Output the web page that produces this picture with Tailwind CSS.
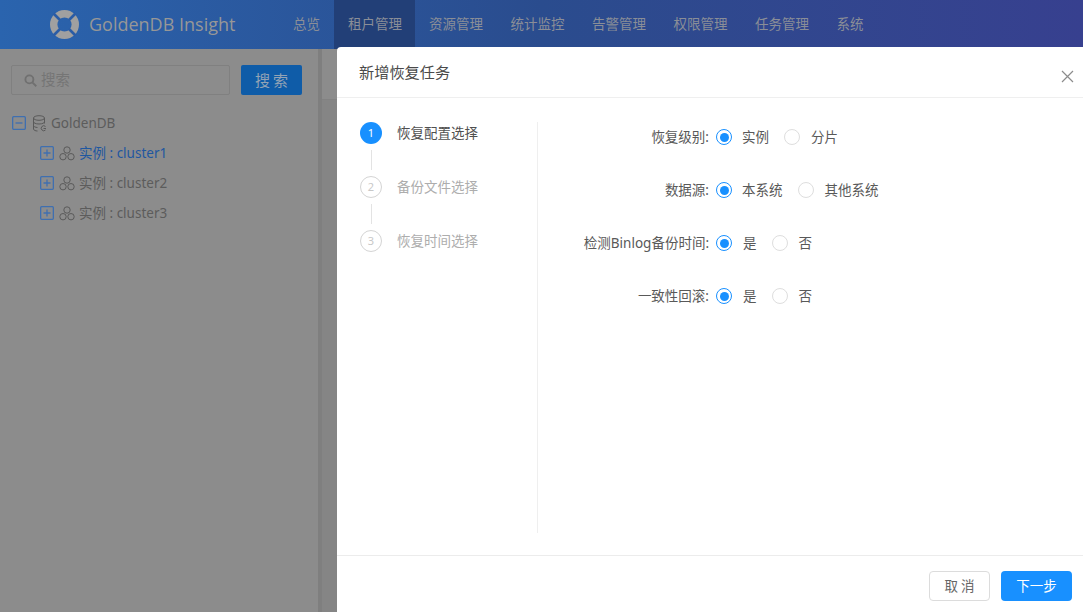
<!DOCTYPE html>
<html lang="en">
<head>
    <meta charset="UTF-8">
    <title>GoldenDB Insight</title>
    <script src="https://cdn.jsdelivr.net/npm/@tailwindcss/browser@4"></script>
</head>
<body class="relative w-[1083px] h-[612px] overflow-hidden bg-[#8c8c8c] font-['Noto_Sans','Noto_Sans_CJK_SC',sans-serif] text-[13.5px]">

    <!-- Top nav -->
    <header class="h-[49px] flex items-center bg-gradient-to-r from-[#2a64ae] via-[#2a4c8e] to-[#37408f] text-[#8a8e97]">
        <div class="flex items-center w-[293px] pl-[50px]">
            <svg class="w-[29px] h-[29px]" viewBox="0 0 29 29">
                <circle cx="14.500" cy="14.500" r="10.800" fill="none" stroke="#a0a0a0" stroke-width="7.400"/>
                <g stroke="#2a5ca6" stroke-width="2.600">
                    <path d="M3.500 3.500l6.500 6.500"/><path d="M25.500 3.500l-6.500 6.500"/><path d="M3.500 25.500l6.500-6.500"/><path d="M25.500 25.500l-6.500-6.500"/>
                </g>
            </svg>
            <span class="ml-[10px] text-[18px] font-['Open_Sans'] text-[#979797]">GoldenDB Insight</span>
        </div>
        <nav class="flex h-full items-center">
            <a class="mr-[14px]">总览</a>
            <a class="h-full w-[81px] pl-[14px] flex items-center bg-[#223f77]">租户管理</a>
            <a class="ml-[14px] mr-[27.500px]">资源管理</a>
            <a class="mr-[27.500px]">统计监控</a>
            <a class="mr-[27.500px]">告警管理</a>
            <a class="mr-[27.500px]">权限管理</a>
            <a class="mr-[27.500px]">任务管理</a>
            <a>系统</a>
        </nav>
    </header>

    <div class="flex h-[563px]">
        <!-- Left tree -->
        <aside class="w-[318px] pl-[11px] pt-[16px] text-[#5c5c5c]">
            <div class="flex gap-[11px]">
                <div class="w-[219px] h-[30px] flex items-center pl-[12px] border border-[#808080] rounded-[2px] text-[#757575]">
                    <svg class="w-[13px] h-[13px]" viewBox="0 0 14 14" fill="none" stroke="#707070" stroke-width="2">
                        <circle cx="5.800" cy="5.800" r="4.300"/><path d="M9 9l4.200 4.200"/>
                    </svg>
                    <span class="ml-[4px] text-[14.500px]">搜索</span>
                </div>
                <button class="w-[61px] h-[30px] pl-[3px] bg-[#0f5ca8] rounded-[2px] text-[#93a3b5] text-[15px] tracking-[3px]">搜索</button>
            </div>

            <ul class="mt-[13px]">
                <li class="h-[30px] flex items-center">
                    <svg class="w-[14px] h-[14px] ml-[1px]" viewBox="0 0 14 14" fill="none" stroke="#3f6fb0" stroke-width="1.300">
                        <rect x="0.650" y="0.650" width="12.700" height="12.700" rx="1"/><path d="M3.500 7h7"/>
                    </svg>
                    <svg class="w-[15px] h-[17px] ml-[6px]" viewBox="0 0 15 17" fill="none" stroke="#5a5a5a">
                        <ellipse cx="7" cy="3" rx="5.500" ry="2.300"/>
                        <path d="M1.500 3v11c0 1.200 2 2 4 2M12.500 3v5.500M1.500 6.800c0 1 2 2.200 5.500 2.200s5.500-1.200 5.500-2.200M1.500 10.500c0 1 2 2 4 2"/>
                        <path d="M13.500 11.500a2.500 2.500 0 1 0 0 3.500M11.500 13.500h2.500"/>
                    </svg>
                    <span class="ml-[4px]">GoldenDB</span>
                </li>
                <li class="h-[30px] flex items-center pl-[29px]">
                    <svg class="w-[14px] h-[14px]" viewBox="0 0 14 14" fill="none" stroke="#3f6fb0" stroke-width="1.300">
                        <rect x="0.650" y="0.650" width="12.700" height="12.700" rx="1"/><path d="M3.500 7h7M7 3.500v7"/>
                    </svg>
                    <svg class="w-[16px] h-[15px] ml-[5px]" viewBox="0 0 16 15" fill="none" stroke="#5a5a5a">
                        <circle cx="8" cy="4" r="3.200"/><circle cx="4" cy="10.700" r="3.200"/><circle cx="12" cy="10.700" r="3.200"/>
                    </svg>
                    <span class="ml-[4px] text-[#1f57a0]">实例 : cluster1</span>
                </li>
                <li class="h-[30px] flex items-center pl-[29px]">
                    <svg class="w-[14px] h-[14px]" viewBox="0 0 14 14" fill="none" stroke="#3f6fb0" stroke-width="1.300">
                        <rect x="0.650" y="0.650" width="12.700" height="12.700" rx="1"/><path d="M3.500 7h7M7 3.500v7"/>
                    </svg>
                    <svg class="w-[16px] h-[15px] ml-[5px]" viewBox="0 0 16 15" fill="none" stroke="#5a5a5a">
                        <circle cx="8" cy="4" r="3.200"/><circle cx="4" cy="10.700" r="3.200"/><circle cx="12" cy="10.700" r="3.200"/>
                    </svg>
                    <span class="ml-[4px]">实例 : cluster2</span>
                </li>
                <li class="h-[30px] flex items-center pl-[29px]">
                    <svg class="w-[14px] h-[14px]" viewBox="0 0 14 14" fill="none" stroke="#3f6fb0" stroke-width="1.300">
                        <rect x="0.650" y="0.650" width="12.700" height="12.700" rx="1"/><path d="M3.500 7h7M7 3.500v7"/>
                    </svg>
                    <svg class="w-[16px] h-[15px] ml-[5px]" viewBox="0 0 16 15" fill="none" stroke="#5a5a5a">
                        <circle cx="8" cy="4" r="3.200"/><circle cx="4" cy="10.700" r="3.200"/><circle cx="12" cy="10.700" r="3.200"/>
                    </svg>
                    <span class="ml-[4px]">实例 : cluster3</span>
                </li>
            </ul>
        </aside>
        <div class="w-[4px] bg-[#7f7f7f]"></div>
        <div class="flex-1 flex flex-col">
            <div class="h-[51px] bg-[#8c8c8c] border-b border-[#828282]"></div>
            <div class="flex-1 bg-[#858585]"></div>
        </div>
    </div>

    <!-- Dialog -->
    <div class="absolute left-[337px] top-[47px] w-[746px] h-[565px] bg-white rounded-tl-[4px] flex flex-col text-[#595959]">
        <div class="h-[51px] flex items-center justify-between pl-[22px] pr-[9px] border-b border-[#efefef]">
            <span class="text-[15.200px] text-[#4a4a4a]">新增恢复任务</span>
            <svg class="w-[13px] h-[13px] mt-[8px]" viewBox="0 0 13 13" fill="none" stroke="#8c8c8c" stroke-width="1.200">
                <path d="M1 1l11 11M12 1L1 12"/>
            </svg>
        </div>

        <div class="flex-1 flex pt-[24px] pl-[23px]">
            <!-- Steps -->
            <div class="w-[178px] h-[411px] border-r border-[#efefef]">
                <div class="flex items-center h-[22px]">
                    <span class="w-[22px] h-[22px] rounded-full bg-[#1890ff] text-white text-[11px] flex items-center justify-center">1</span>
                    <span class="ml-[15px] text-[#4f4f4f]">恢复配置选择</span>
                </div>
                <div class="w-px h-[20px] bg-[#e3e3e3] ml-[11px] my-[6px]"></div>
                <div class="flex items-center h-[22px]">
                    <span class="w-[22px] h-[22px] rounded-full border border-[#d4d4d4] text-[#c8c8c8] text-[11px] flex items-center justify-center">2</span>
                    <span class="ml-[15px] text-[#adadad]">备份文件选择</span>
                </div>
                <div class="w-px h-[20px] bg-[#e3e3e3] ml-[11px] my-[6px]"></div>
                <div class="flex items-center h-[22px]">
                    <span class="w-[22px] h-[22px] rounded-full border border-[#d4d4d4] text-[#c8c8c8] text-[11px] flex items-center justify-center">3</span>
                    <span class="ml-[15px] text-[#adadad]">恢复时间选择</span>
                </div>
            </div>

            <!-- Form -->
            <div class="flex flex-col gap-[31px] pt-[4px]">
                <div class="flex items-center h-[22px]">
                    <label class="w-[178px] text-right pr-[7px]">恢复级别:</label>
                    <span class="w-[16px] h-[16px] rounded-full border border-[#1890ff] flex items-center justify-center"><span class="w-[9px] h-[9px] rounded-full bg-[#1890ff]"></span></span>
                    <span class="ml-[10px]">实例</span>
                    <span class="ml-[15px] w-[16px] h-[16px] rounded-full border border-[#dedede]"></span>
                    <span class="ml-[11px]">分片</span>
                </div>
                <div class="flex items-center h-[22px]">
                    <label class="w-[178px] text-right pr-[7px]">数据源:</label>
                    <span class="w-[16px] h-[16px] rounded-full border border-[#1890ff] flex items-center justify-center"><span class="w-[9px] h-[9px] rounded-full bg-[#1890ff]"></span></span>
                    <span class="ml-[10px]">本系统</span>
                    <span class="ml-[15px] w-[16px] h-[16px] rounded-full border border-[#dedede]"></span>
                    <span class="ml-[11px]">其他系统</span>
                </div>
                <div class="flex items-center h-[22px]">
                    <label class="w-[178px] text-right pr-[7px]">检测Binlog备份时间:</label>
                    <span class="w-[16px] h-[16px] rounded-full border border-[#1890ff] flex items-center justify-center"><span class="w-[9px] h-[9px] rounded-full bg-[#1890ff]"></span></span>
                    <span class="ml-[11px]">是</span>
                    <span class="ml-[15px] w-[16px] h-[16px] rounded-full border border-[#dedede]"></span>
                    <span class="ml-[11px]">否</span>
                </div>
                <div class="flex items-center h-[22px]">
                    <label class="w-[178px] text-right pr-[7px]">一致性回滚:</label>
                    <span class="w-[16px] h-[16px] rounded-full border border-[#1890ff] flex items-center justify-center"><span class="w-[9px] h-[9px] rounded-full bg-[#1890ff]"></span></span>
                    <span class="ml-[11px]">是</span>
                    <span class="ml-[15px] w-[16px] h-[16px] rounded-full border border-[#dedede]"></span>
                    <span class="ml-[11px]">否</span>
                </div>
            </div>
        </div>

        <div class="h-[57px] border-t border-[#ececec] flex items-start justify-end gap-[11px] pr-[11px] pt-[15px]">
            <button class="w-[61px] h-[30px] pl-[3px] border border-[#dcdcdc] rounded-[4px] tracking-[3px] text-[#666666]">取消</button>
            <button class="w-[71px] h-[30px] bg-[#1890ff] rounded-[4px] text-white">下一步</button>
        </div>
    </div>
</body>
</html>
